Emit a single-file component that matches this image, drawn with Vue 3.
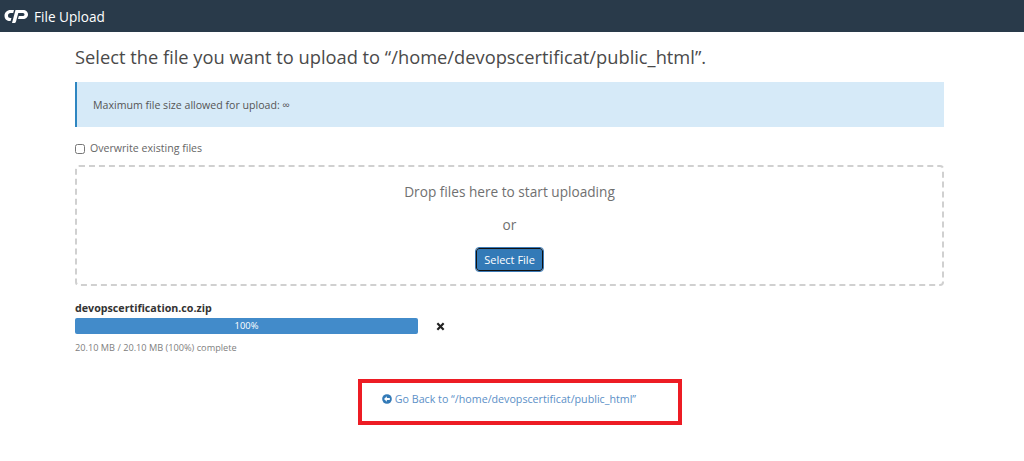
<script setup>
const fileName = "devopscertification.co.zip";
const path = "/home/devopscertificat/public_html";
const progress = 100;
</script>

<template>
  <div class="page">
    <header class="topbar">
      <svg class="logo" viewBox="0 0 24 14" width="24" height="14">
        <path d="M10 1H6.5C3 1 .5 3.5 .5 6.7 .5 10 3 12 6 12H6.6L7.4 9H6.3C5 9 4 8 4 6.7 4 5 5.2 4 6.5 4H9.2Z" fill="#fff" />
        <path d="M8 14 11.5 1H19C22 1 24 3 24 5.5 24 8 22 10 19 10H14L14.8 7H18C19.5 7 20.5 6.5 20.5 5.5 20.5 4.5 19.5 4 18.5 4H14.3L12 12.4C11.7 13.4 11 14 10 14Z" fill="#fff" />
      </svg>
      <span class="topbar-title">File Upload</span>
    </header>

    <main class="content">
      <h1 class="title">Select the file you want to upload to “{{ path }}”.</h1>

      <div class="alert">Maximum file size allowed for upload: ∞</div>

      <label class="overwrite">
        <input type="checkbox" />
        <span>Overwrite existing files</span>
      </label>

      <div class="dropzone">
        <div class="drop-text">Drop files here to start uploading</div>
        <div class="drop-or">or</div>
        <button class="select-btn" type="button">Select File</button>
      </div>

      <div class="file-name">{{ fileName }}</div>
      <div class="progress-row">
        <div class="progress">
          <div class="progress-bar" :style="{ width: progress + '%' }">{{ progress }}%</div>
        </div>
        <svg class="remove" viewBox="0 0 10 10" width="9" height="9">
          <path d="M1.5 1.5 8.5 8.5M8.5 1.5 1.5 8.5" stroke="#222" stroke-width="2.4" fill="none" />
        </svg>
      </div>
      <div class="status">20.10 MB / 20.10 MB (100%) complete</div>

      <div class="back-row">
        <a class="back-link" href="#">
          <svg class="back-icon" viewBox="0 0 12 12" width="10" height="10">
            <circle cx="6" cy="6" r="5.8" fill="#337ab7" />
            <path d="M2.4 6 5.8 2.8V4.8H9.4V7.2H5.8V9.2Z" fill="#fff" />
          </svg>
          Go Back to “{{ path }}”
        </a>
      </div>
    </main>

    <div class="annotation"></div>
  </div>
</template>

<style scoped>
.page {
  position: relative;
  height: 461px;
  overflow: hidden;
  background: #fff;
  font-family: "Open Sans", "Liberation Sans", sans-serif;
  color: #333;
}

.topbar {
  height: 32px;
  background: #293a4a;
  display: flex;
  align-items: center;
  padding-left: 4px;
  color: #fff;
}

.logo {
  flex: none;
}

.topbar-title {
  margin-left: 6px;
  font-size: 13.6px;
}

.content {
  width: 869px;
  margin-left: 75px;
}

.title {
  margin: 0;
  padding-top: 11px;
  height: 39px;
  font-size: 18.3px;
  line-height: 27px;
  font-weight: 400;
  color: #4a4a4a;
}

.alert {
  height: 45px;
  box-sizing: border-box;
  background: #d6eaf8;
  border-left: 2px solid #2e86c1;
  padding-left: 16px;
  display: flex;
  align-items: center;
  font-size: 10.6px;
  color: #555;
}

.overwrite {
  display: flex;
  align-items: center;
  height: 16px;
  margin-top: 13px;
  font-size: 10.6px;
  color: #666;
}

.overwrite input {
  width: 10px;
  height: 10px;
  margin: 1px 5px 0 0;
}

.dropzone {
  height: 121px;
  margin-top: 9px;
  box-sizing: border-box;
  border: 2px dashed #d0d0d0;
  border-radius: 4px;
  display: flex;
  flex-direction: column;
  align-items: center;
  padding-top: 15px;
  color: #707070;
}

.drop-text {
  font-size: 13.65px;
  line-height: 20px;
}

.drop-or {
  font-size: 13.65px;
  line-height: 20px;
  margin-top: 13px;
}

.select-btn {
  margin-top: 13px;
  width: 67px;
  height: 23px;
  padding: 0;
  background: #337ab7;
  color: #fff;
  border: 1px solid #111;
  border-radius: 3px;
  outline: 1px solid #3c7ab5;
  font-family: inherit;
  font-size: 11px;
}

.file-name {
  margin-top: 15px;
  font-size: 10.7px;
  line-height: 14px;
  font-weight: 700;
  color: #333;
}

.progress-row {
  display: flex;
  align-items: center;
  margin-top: 3px;
}

.progress {
  width: 343px;
  height: 16px;
  border-radius: 2px;
  background: #eee;
  overflow: hidden;
}

.progress-bar {
  height: 100%;
  background: #428bca;
  color: #fff;
  font-size: 9.4px;
  line-height: 16px;
  text-align: center;
}

.remove {
  margin-left: 18px;
}

.status {
  margin-top: 8px;
  font-size: 9.2px;
  line-height: 12px;
  color: #808080;
}

.back-row {
  margin-top: 36px;
  padding-left: 307px;
  line-height: 14px;
}

.back-link {
  font-size: 10.7px;
  color: #5b8fc7;
  text-decoration: none;
}

.back-icon {
  vertical-align: -1px;
}

/* red box drawn on the screenshot */
.annotation {
  position: absolute;
  left: 358px;
  top: 379px;
  width: 324px;
  height: 46px;
  box-sizing: border-box;
  border: 4px solid #ed1c24;
}
</style>

<style>
body {
  margin: 0;
}
</style>
